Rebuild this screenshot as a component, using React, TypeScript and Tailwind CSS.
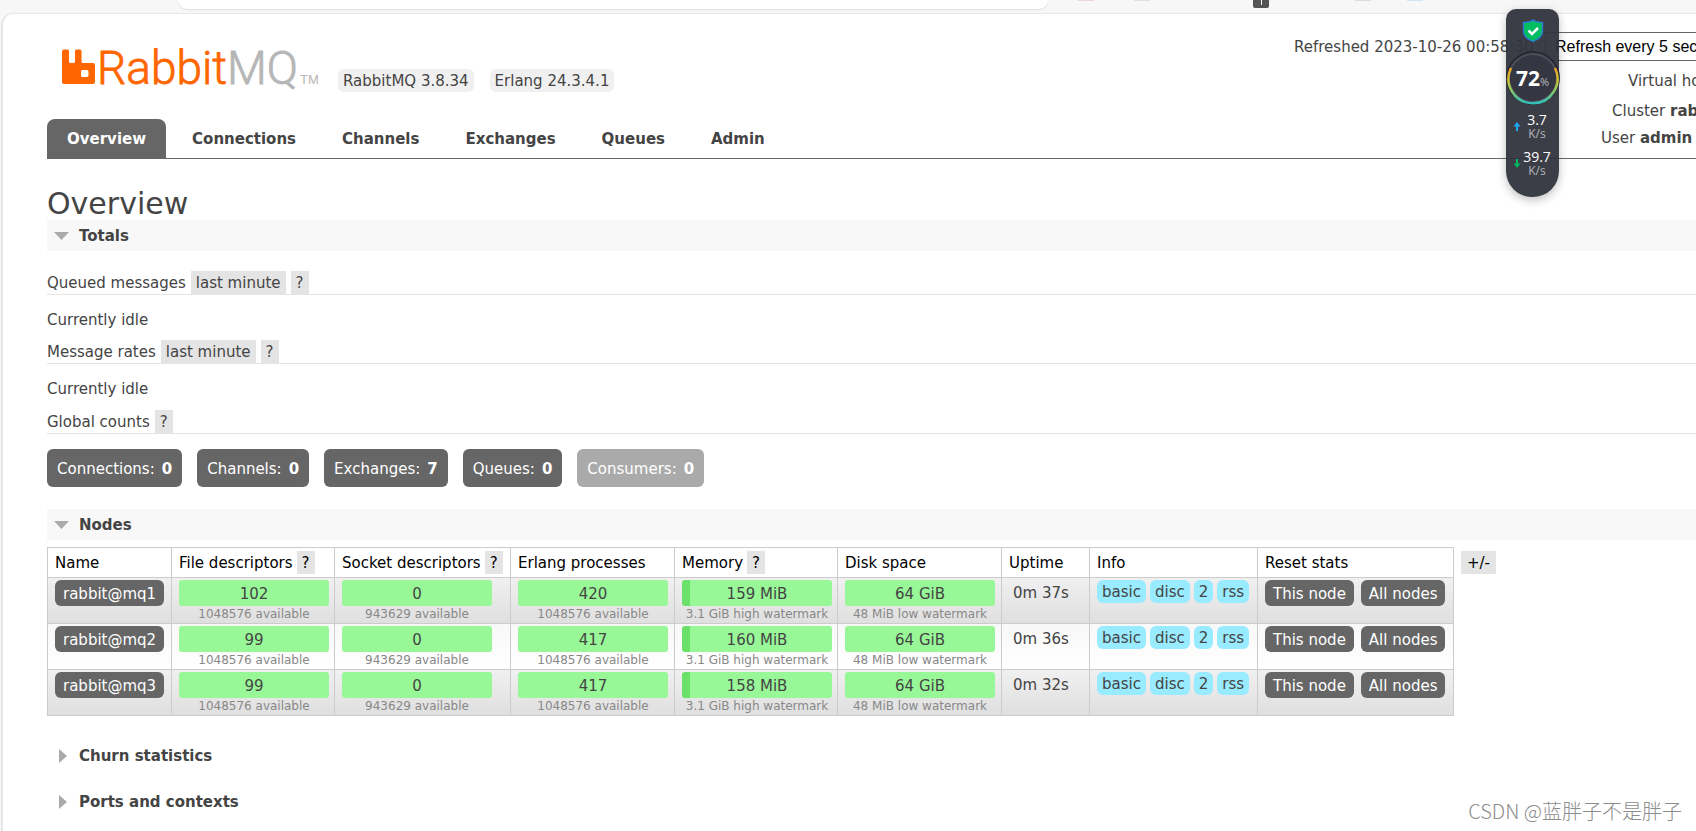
import type { ReactNode } from "react";

const tabs = ["Overview", "Connections", "Channels", "Exchanges", "Queues", "Admin"];

const counts = [
  { label: "Connections", value: 0 },
  { label: "Channels", value: 0 },
  { label: "Exchanges", value: 7 },
  { label: "Queues", value: 0 },
  { label: "Consumers", value: 0, disabled: true },
];

const nodes = [
  { name: "rabbit@mq1", fd: "102", proc: "420", mem: "159 MiB", uptime: "0m 37s" },
  { name: "rabbit@mq2", fd: "99", proc: "417", mem: "160 MiB", uptime: "0m 36s" },
  { name: "rabbit@mq3", fd: "99", proc: "417", mem: "158 MiB", uptime: "0m 32s" },
];

const columns = [
  { label: "Name", width: "w-[124px]" },
  { label: "File descriptors", width: "w-[163px]", help: true },
  { label: "Socket descriptors", width: "w-[176px]", help: true },
  { label: "Erlang processes", width: "w-[164px]" },
  { label: "Memory", width: "w-[163px]", help: true },
  { label: "Disk space", width: "w-[164px]" },
  { label: "Uptime", width: "w-[88px]" },
  { label: "Info", width: "w-[168px]" },
  { label: "Reset stats", width: "w-[196px]" },
];

function Help() {
  return (
    <button type="button" className="h-[23px] bg-[#e4e4e4] px-[5px] leading-[25px]">
      ?
    </button>
  );
}

function SectionBar({ title }: { title: string }) {
  return (
    <h2 className="bg-[#f8f8f8] font-bold">
      <button type="button" className="flex h-[31px] w-full items-center gap-[10px] pl-[7px]">
        <svg width="15" height="8" viewBox="0 0 15 8" aria-hidden="true">
          <path d="M0 0H15L7.5 8Z" fill="#aaa" />
        </svg>
        <span className="pt-[2px]">{title}</span>
      </button>
    </h2>
  );
}

function ClosedSection({ title }: { title: string }) {
  return (
    <h2 className="font-bold">
      <button type="button" className="flex h-[31px] w-full items-center gap-3 pl-3">
        <svg width="8" height="14" viewBox="0 0 8 14" aria-hidden="true">
          <path d="M0 0V14L8 7Z" fill="#aaa" />
        </svg>
        <span className="pt-[2px]">{title}</span>
      </button>
    </h2>
  );
}

function ChartHeading({ title, range }: { title: string; range?: string }) {
  return (
    <h3 className="flex h-6 items-center gap-[5px] border-b border-[#e4e4e4]">
      <span className="pt-[2px]">{title}</span>
      {range && (
        <button type="button" className="h-[23px] bg-[#e4e4e4] px-[5px] leading-[25px]">
          {range}
        </button>
      )}
      <Help />
    </h3>
  );
}

function Bar({ value, note, used }: { value: string; note: string; used?: boolean }) {
  return (
    <div className="w-[150px] text-center">
      <div
        className={
          used
            ? "h-[26px] rounded-[3px] bg-linear-to-r from-[#6ae26a] from-[8px] to-[#98f898] to-[8px] leading-[28px]"
            : "h-[26px] rounded-[3px] bg-[#98f898] leading-[28px]"
        }
      >
        {value}
      </div>
      <div className="text-xs leading-4 whitespace-nowrap text-[#888]">{note}</div>
    </div>
  );
}

function Cell({ children }: { children: ReactNode }) {
  return <td className="h-[46px] border border-[#ccc] pt-[2px] pr-[5px] pb-0 pl-[7px] align-top">{children}</td>;
}

function Tag({ children }: { children: ReactNode }) {
  return <abbr className="h-[23px] rounded-[6px] bg-[#99ebff] px-[5px] leading-[25px]">{children}</abbr>;
}

function DarkButton({ children }: { children: ReactNode }) {
  return (
    <button type="button" className="h-[26px] rounded-[6px] bg-[#666] px-[8px] leading-[28px] whitespace-nowrap text-white">
      {children}
    </button>
  );
}

function Logo() {
  return (
    <a href="#overview" aria-label="RabbitMQ" className="block">
      <svg width="262" height="48" viewBox="0 0 262 48" className="block overflow-visible">
        <path
          d="M2 1.5H5.5Q7 1.5 7 3V13.5Q7 15 8.500 15H11.500Q13 15 13 13.500V3Q13 1.500 14.500 1.500H18Q19.500 1.500 19.500 3V13.500Q19.500 15 21 15H31Q33 15 33 17V34Q33 36 31 36H2Q0 36 0 34V3.500Q0 1.500 2 1.500ZM20.500 22Q19 22 19 23.500V27.500Q19 29 20.500 29H25Q26.500 29 26.500 27.500V23.500Q26.500 22 25 22Z"
          fill="#f60"
          fillRule="evenodd"
        />
        <text
          x="35"
          y="36"
          fontSize="46"
          fontWeight="300"
          fontFamily="Roboto, sans-serif"
          fill="#f60"
          stroke="#f60"
          strokeWidth="0.8"
        >
          Rabbit
          <tspan fill="#b6b6b6" stroke="#b6b6b6">MQ</tspan>
        </text>
        <text x="238" y="36" fontSize="13" fontFamily="'Liberation Sans', sans-serif" fill="#b6b6b6">
          TM
        </text>
      </svg>
    </a>
  );
}

function Monitor() {
  return (
    <aside className="absolute top-[9px] left-[1506px] z-10 flex h-[188px] w-[53px] flex-col items-center rounded-t-[10px] rounded-b-[26px] bg-[#31343d]/95 pt-[10px] font-['Open_Sans',sans-serif] text-white shadow-[0_3px_10px_rgba(0,0,0,0.25)]">
      <svg width="22" height="24" viewBox="0 0 22 24" aria-hidden="true">
        <path
          d="M11 1Q13 3 20.500 3.500V13Q20 19 11 22.500Q2 19 1.500 13V3.500Q9 3 11 1Z"
          fill="#00bd62"
          stroke="#2f78d8"
          strokeWidth="1.300"
        />
        <path d="M6.500 11.500L10 15L16 9" fill="none" stroke="#fff" strokeWidth="2.500" />
      </svg>
      <div className="relative mt-[8px] h-[54px] w-[54px]">
        <svg width="54" height="54" viewBox="0 0 54 54" className="block" aria-hidden="true">
          <defs>
            <linearGradient id="load" x1="0" y1="0" x2="0" y2="1">
              <stop offset="0" stopColor="#f0a020" />
              <stop offset="0.450" stopColor="#b8c840" />
              <stop offset="1" stopColor="#30c0b8" />
            </linearGradient>
          </defs>
          <circle cx="27" cy="27" r="27" fill="#262832" />
          <circle cx="27" cy="27" r="24" fill="#343642" stroke="#4c4e59" strokeWidth="2" />
          <path d="M5 17A24.500 24.500 0 1 0 49 17" fill="none" stroke="url(#load)" strokeWidth="2.500" />
        </svg>
        <div className="absolute inset-0 flex items-baseline justify-center pt-[13px] leading-7">
          <span className="text-[21px] font-bold">72</span>
          <span className="text-[11px] text-[#bbb]">%</span>
        </div>
      </div>
      <div className="grid w-full gap-[7px] pt-[6px]">
        <Rate value="3.7" up />
        <Rate value="39.7" />
      </div>
    </aside>
  );
}

function Rate({ value, up }: { value: string; up?: boolean }) {
  return (
    <div className="grid h-[30px] grid-cols-[14px_1fr] items-center pr-[5px] pl-[4px] text-center">
      <svg width="8" height="9" viewBox="0 0 8 9" className="ml-[3px]" aria-hidden="true">
        {up ? (
          <path d="M4 0L7.500 4.500H5V9H3V4.500H0.500Z" fill="#1ba8f0" />
        ) : (
          <path d="M4 9L7.500 4.500H5V0H3V4.500H0.500Z" fill="#00b860" />
        )}
      </svg>
      <div className="-ml-1">
        <div className="text-sm leading-4">{value}</div>
        <div className="text-xs leading-3 text-[#b4b5ba]">K/s</div>
      </div>
    </div>
  );
}

export default function App() {
  return (
    <div className="relative min-h-screen overflow-hidden bg-[#f7f7f7] font-['DejaVu_Sans',Verdana,sans-serif] text-[15px] leading-[23px] text-[#444]">
      <div className="flex h-[13px] items-start">
        <div className="ml-[178px] h-[9px] w-[870px] shrink-0 rounded-b-[20px] bg-white shadow-[0_1px_2px_rgba(0,0,0,0.1)]" />
        <div className="ml-[30px] h-px w-4 bg-[#f0d4d8]" />
        <div className="ml-[40px] h-px w-4 bg-[#e2e0e0]" />
        <div className="ml-[103px] flex h-[11px] w-4 justify-center">
          <div className="flex h-[8px] w-4 justify-center rounded-b-[2px] bg-[#555]">
            <div className="h-[5px] w-px bg-white" />
          </div>
        </div>
        <div className="ml-[86px] h-px w-4 bg-[#dcdcdc]" />
        <div className="ml-[36px] h-px w-4 bg-[#d5e3f8]" />
      </div>

      <main className="ml-[1px] min-h-[818px] rounded-tl-[12px] border-t border-l-2 border-[#e6e6e6] bg-white pl-[44px]">
        <header className="flex h-[105px] items-start">
          <div className="pt-[34px] pl-[15px]">
            <Logo />
          </div>
          <div className="flex gap-4 pt-[55px] pl-[14px] leading-[25px]">
            <span className="h-[23px] rounded-[6px] bg-[#f0f0f0] px-[5px] whitespace-nowrap">RabbitMQ 3.8.34</span>
            <span className="h-[23px] rounded-[6px] bg-[#f0f0f0] px-[5px] whitespace-nowrap">Erlang 24.3.4.1</span>
          </div>
          <div className="ml-auto w-[402px] shrink-0 overflow-hidden pt-[18px] whitespace-nowrap">
            <div className="flex items-center gap-[5px]">
              <label htmlFor="refresh" className="w-[246px] shrink-0 pt-[2px]">
                Refreshed 2023-10-26 00:58:30
              </label>
              <select
                id="refresh"
                className="h-[29px] w-[220px] shrink-0 appearance-none border border-[#666] bg-white pl-[9px] font-['Liberation_Sans',Arial,sans-serif] text-base text-black"
              >
                <option>Refresh every 5 seconds</option>
              </select>
            </div>
            <div className="mt-[9px] pl-[334px]">Virtual host</div>
            <div className="mt-[7px] pl-[318px]">
              Cluster <b>rabbit@mq1</b>
            </div>
            <div className="mt-[4px] pl-[307px]">
              User <b>admin</b>
            </div>
          </div>
        </header>

        <nav className="flex h-[40px] gap-[6px] border-b border-[#666] font-bold">
          {tabs.map((t, i) => (
            <a
              key={t}
              href={"#" + t.toLowerCase()}
              className={
                i === 0
                  ? "h-[39px] rounded-t-[8px] bg-[#666] px-5 leading-[41px] text-white"
                  : "h-[39px] px-5 leading-[41px]"
              }
            >
              {t}
            </a>
          ))}
        </nav>

        <h1 className="mt-[25px] h-9 text-[30px] leading-[39px]">Overview</h1>

        <SectionBar title="Totals" />
        <div className="pt-5">
          <ChartHeading title="Queued messages" range="last minute" />
          <p className="pt-[14px] pb-[8px]">Currently idle</p>
          <ChartHeading title="Message rates" range="last minute" />
          <p className="pt-[14px] pb-[9px]">Currently idle</p>
          <ChartHeading title="Global counts" />
        </div>
        <div className="mt-[15px] mb-[22px] flex gap-[15px]">
          {counts.map((c) => (
            <a
              key={c.label}
              href={"#" + c.label.toLowerCase()}
              className={
                c.disabled
                  ? "flex h-[38px] gap-[7px] rounded-[6px] bg-[#aaa] px-[10px] leading-[40px] text-white"
                  : "flex h-[38px] gap-[7px] rounded-[6px] bg-[#666] px-[10px] leading-[40px] text-white"
              }
            >
              <span>{c.label}:</span>
              <b>{c.value}</b>
            </a>
          ))}
        </div>

        <SectionBar title="Nodes" />
        <div className="mt-[7px] flex items-start gap-[7px]">
          <table className="w-[1406px] shrink-0 table-fixed border-collapse">
            <thead>
              <tr>
                {columns.map((c) => (
                  <th
                    key={c.label}
                    className={c.width + " h-[30px] border border-[#ccc] px-[7px] py-0 text-left font-normal text-black"}
                  >
                    <div className="flex items-center gap-1 whitespace-nowrap">
                      <span className="pt-[2px]">{c.label}</span>
                      {c.help && <Help />}
                    </div>
                  </th>
                ))}
              </tr>
            </thead>
            <tbody>
              {nodes.map((n, i) => (
                <tr
                  key={n.name}
                  className={
                    i % 2 === 0
                      ? "bg-linear-to-b from-[#f0f0f0] to-[#dfdfdf]"
                      : "bg-linear-to-b from-[#f8f8f8] to-white"
                  }
                >
                  <Cell>
                    <DarkButton>{n.name}</DarkButton>
                  </Cell>
                  <Cell>
                    <Bar value={n.fd} note="1048576 available" />
                  </Cell>
                  <Cell>
                    <Bar value="0" note="943629 available" />
                  </Cell>
                  <Cell>
                    <Bar value={n.proc} note="1048576 available" />
                  </Cell>
                  <Cell>
                    <Bar value={n.mem} note="3.1 GiB high watermark" used />
                  </Cell>
                  <Cell>
                    <Bar value="64 GiB" note="48 MiB low watermark" />
                  </Cell>
                  <Cell>
                    <div className="pl-1 leading-[27px] whitespace-nowrap">{n.uptime}</div>
                  </Cell>
                  <Cell>
                    <div className="flex gap-1">
                      <Tag>basic</Tag>
                      <Tag>disc</Tag>
                      <Tag>2</Tag>
                      <Tag>rss</Tag>
                    </div>
                  </Cell>
                  <Cell>
                    <div className="flex gap-[7px]">
                      <DarkButton>This node</DarkButton>
                      <DarkButton>All nodes</DarkButton>
                    </div>
                  </Cell>
                </tr>
              ))}
            </tbody>
          </table>
          <button type="button" className="mt-1 h-[23px] bg-[#e4e4e4] px-[6px] leading-[25px] text-black">
            +/-
          </button>
        </div>

        <div className="mt-6 grid gap-[15px]">
          <ClosedSection title="Churn statistics" />
          <ClosedSection title="Ports and contexts" />
        </div>
      </main>

      <Monitor />
      <div className="absolute right-[14px] bottom-[6px] font-['Noto_Sans_CJK_SC',sans-serif] text-xl leading-7 font-light text-[#8c8c8c]">
        CSDN @蓝胖子不是胖子
      </div>
    </div>
  );
}
